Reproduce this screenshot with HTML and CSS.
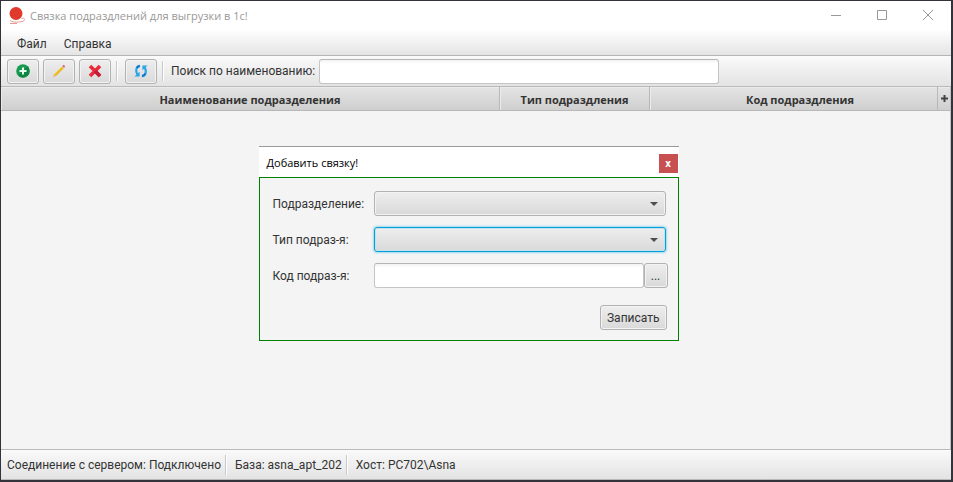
FILE: index.html
```html
<!DOCTYPE html>
<html lang="ru">
<head>
<meta charset="utf-8">
<title>Связка подраздлений для выгрузки в 1с!</title>
<link rel="stylesheet" href="styles.css">
</head>
<body>
<div class="window">
  <header class="titlebar">
    <svg class="app-icon" width="18" height="18" viewBox="0 0 18 18" aria-hidden="true">
      <circle cx="8" cy="6.500" r="6.500" fill="#e23b2e"/>
      <path d="M3 5.500L10 2M4 9L12 5M7 12L13 9" stroke="#d2382c" stroke-width=".7"/>
      <path d="M2 13.500C6 16 11 15 14 14.500C18 13.500 17 10.500 13.500 11.500M2 16.500H9" fill="none" stroke="#e79a92" stroke-width="1"/>
    </svg>
    <h1 class="title">Связка подраздлений для выгрузки в 1с!</h1>
    <div class="window-controls">
      <button class="window-button" type="button" aria-label="Свернуть"><svg width="12" height="12" viewBox="0 0 12 12"><path d="M1 5.500H11"/></svg></button>
      <button class="window-button" type="button" aria-label="Развернуть"><svg width="12" height="12" viewBox="0 0 12 12"><path d="M1.500 .5H10.500V9.500H1.500Z"/></svg></button>
      <button class="window-button" type="button" aria-label="Закрыть"><svg width="12" height="12" viewBox="0 0 12 12"><path d="M1 0L11 10M11 0L1 10"/></svg></button>
    </div>
  </header>

  <nav class="menubar">
    <button class="menu-item" type="button">Файл</button>
    <button class="menu-item" type="button">Справка</button>
  </nav>

  <div class="toolbar">
    <button class="button tool" type="button" aria-label="Добавить">
      <svg width="16" height="16" viewBox="0 0 16 16"><circle cx="8" cy="8" r="6.800" fill="#169b50"/><path d="M12.800 3.200A6.800 6.800 0 0 1 3.200 12.800Z" fill="#0f8742"/><path d="M8 4.500V11.500M4.500 8H11.500" stroke="#e8fff0" stroke-width="2"/></svg>
    </button>
    <button class="button tool" type="button" aria-label="Изменить">
      <svg width="16" height="16" viewBox="0 0 16 16"><path d="M3.500 12.500L12 4" stroke="#f3bd12" stroke-width="2.200"/><path d="M4.300 13.300L12.800 4.800" stroke="#dda30c" stroke-width=".7"/><path d="M1.500 14.500L2.600 11.600L4.400 13.400Z" fill="#d9c4a4"/><path d="M11.200 3.200L12.800 4.800" stroke="#d8d8d8" stroke-width="1.200"/><path d="M12 2.400L13.600 4" stroke="#e0606a" stroke-width="1.800"/></svg>
    </button>
    <button class="button tool" type="button" aria-label="Удалить">
      <svg width="16" height="16" viewBox="0 0 16 16"><path d="M3 3L13 13M13 3L3 13" stroke="#ea2b3c" stroke-width="3.600"/><path d="M8 8L13 13" stroke="#c31c35" stroke-width="3.600"/></svg>
    </button>
    <span class="separator"></span>
    <button class="button tool" type="button" aria-label="Обновить">
      <svg width="16" height="16" viewBox="0 0 16 16" fill="none"><path d="M7 2.800C2.800 3.500 2.200 8.500 4.600 11.800" stroke="#2aa5e8" stroke-width="2.200"/><path d="M1.400 13.400H6.600V8.800Z" fill="#2aa5e8"/><path d="M6.600 2.900C5.200 3.200 4.300 4 3.800 5" stroke="#1677c8" stroke-width="2.200"/><path d="M9 13.200C13.200 12.500 13.800 7.500 11.400 4.200" stroke="#2aa5e8" stroke-width="2.200"/><path d="M9 13.200C10.800 12.900 11.900 11.800 12.300 10.500" stroke="#1677c8" stroke-width="2.200"/><path d="M14.600 2.600H9.400V7.200Z" fill="#2aa5e8"/></svg>
    </button>
    <span class="separator"></span>
    <label class="search-label" for="search">Поиск по наименованию:</label>
    <input class="field search" id="search" type="text">
  </div>

  <main class="content">
    <table class="grid">
      <colgroup><col class="col-name"><col class="col-type"><col class="col-code"></colgroup>
      <thead>
        <tr>
          <th scope="col">Наименование подразделения</th>
          <th scope="col">Тип подраздления</th>
          <th scope="col">Код подраздления</th>
        </tr>
      </thead>
    </table>
    <button class="column-menu" type="button" aria-label="Столбцы"><svg width="7" height="7" viewBox="0 0 7 7"><path d="M3.500 0V7M0 3.500H7" stroke="#444" stroke-width="2"/></svg></button>

    <section class="dialog" role="dialog" aria-labelledby="dialog-title">
      <div class="dialog-head">
        <h2 class="dialog-title" id="dialog-title">Добавить связку!</h2>
        <button class="dialog-close" type="button">x</button>
      </div>
      <form class="dialog-body">
        <div class="row">
          <label class="row-label" for="unit">Подразделение:</label>
          <span class="combo"><select class="button combo-box" id="unit"></select></span>
        </div>
        <div class="row">
          <label class="row-label" for="type">Тип подраз-я:</label>
          <span class="combo"><select class="button combo-box active" id="type"></select></span>
        </div>
        <div class="row">
          <label class="row-label" for="code">Код подраз-я:</label>
          <input class="field code" id="code" type="text">
          <button class="button browse" type="button">...</button>
        </div>
        <div class="actions">
          <button class="button save" type="button">Записать</button>
        </div>
      </form>
    </section>
  </main>

  <footer class="statusbar">
    <span>Соединение с сервером: Подключено</span>
    <span class="separator"></span>
    <span>База: asna_apt_202</span>
    <span class="separator"></span>
    <span>Хост: PC702\Asna</span>
  </footer>
</div>
</body>
</html>
```
FILE: styles.css
```css
* {
  box-sizing: border-box;
}

body {
  margin: 0;
  background: #2b282b;
  color: #333;
  font: 12px/16px Roboto, "Open Sans", sans-serif;
}

button,
input,
select {
  margin: 0;
  font: inherit;
  color: inherit;
}

.window {
  display: flex;
  flex-direction: column;
  height: 100vh;
  border: solid #34323a;
  border-width: 1px 2px 2px 1px;
  background: #f4f4f4;
}

.titlebar {
  display: flex;
  flex: none;
  align-items: center;
  height: 30px;
  padding-left: 7px;
  background: #fff;
}

.title {
  flex: 1;
  margin: 0 0 0 4px;
  color: #999;
  font: 400 11px/16px "Open Sans", sans-serif;
}

.window-controls {
  display: flex;
}

.window-button {
  display: grid;
  place-items: center;
  width: 46px;
  height: 30px;
  padding: 0;
  border: 0;
  background: none;
}

.window-button path {
  fill: none;
  stroke: #999;
}

.menubar {
  display: flex;
  flex: none;
  height: 25px;
  padding: 2px 8px 0;
  border-bottom: 1px solid #b5b5b5;
  background: linear-gradient(#fdfdfd, #e4e4e4);
}

.menu-item {
  padding: 0 8px;
  border: 0;
  background: none;
}

.menu-item + .menu-item {
  margin-left: 1px;
}

.toolbar {
  display: flex;
  flex: none;
  align-items: center;
  gap: 4px;
  height: 31px;
  padding: 0 6px;
  border-bottom: 1px solid #bababa;
  background: linear-gradient(#fafafa, #e3e3e3);
}

.button {
  display: grid;
  place-items: center;
  height: 25px;
  padding: 0;
  border: 1px solid #b2b2b2;
  border-radius: 3px;
  background: linear-gradient(#eeeeee, #d9d9d9);
  box-shadow: inset 0 0 0 1px #f3f3f3;
}

.tool {
  width: 32px;
}

.separator {
  width: 2px;
  height: 20px;
  margin: 0 4px 0 0;
  border-left: 1px solid #c8c8c8;
  background: #fff;
}

.toolbar .separator {
  margin: 0 3px 0 1px;
}

.search-label {
  white-space: nowrap;
}

.field {
  height: 25px;
  padding: 0 7px;
  border: 1px solid #c5c5c5;
  border-top-color: #b5b5b5;
  border-radius: 3px;
  background: linear-gradient(#f3f3f3, #fff 4px);
}

.search {
  width: 400px;
}

.content {
  position: relative;
  flex: 1;
  border: solid #c2c2c2;
  border-width: 0 1px 0 0;
}

.grid {
  width: 100%;
  border-collapse: separate;
  border-spacing: 0;
  table-layout: fixed;
}

.grid th {
  height: 24px;
  padding: 2px 0 0;
  border: solid #b8b8b8;
  border-width: 0 1px 1px 0;
  background: linear-gradient(#e4e4e4, #cfcfcf);
  box-shadow: inset 1px 1px 0 #ebebeb;
  font: 700 11px/16px "Open Sans", sans-serif;
}

.grid th:last-child {
  border-right: 0;
}

.col-type {
  width: 150px;
}

.col-code {
  width: 300px;
}

.column-menu {
  position: absolute;
  top: 0;
  right: 0;
  display: grid;
  place-items: center;
  width: 13px;
  height: 23px;
  padding: 0;
  border: 0;
  border-left: 1px solid #b8b8b8;
  background: none;
}

.dialog {
  position: absolute;
  top: 59px;
  left: calc(50% - 217px);
  width: 420px;
}

.dialog-head {
  display: flex;
  align-items: center;
  justify-content: space-between;
  height: 31px;
  padding: 1px 1px 0 8px;
  border-top: 1px solid #999;
  background: #fff;
}

.dialog-title {
  margin: 0;
  color: #000;
  font: 400 11px/16px "Open Sans", sans-serif;
}

.dialog-close {
  width: 19px;
  height: 19px;
  margin-top: 2px;
  padding: 0;
  border: 0;
  background: #c75050;
  color: #fff;
  font-size: 11px;
  font-weight: 700;
  line-height: 16px;
}

.dialog-body {
  display: flex;
  flex-direction: column;
  gap: 11px;
  padding: 13px 10px 10px 13px;
  border: 1px solid #008000;
  background: #f4f4f4;
}

.row {
  display: flex;
  align-items: center;
}

.row-label {
  flex: none;
  width: 101px;
}

.combo {
  position: relative;
  flex: 1;
  margin-right: 2px;
}

.combo::after {
  content: "";
  position: absolute;
  top: 11px;
  right: 8px;
  border: solid transparent;
  border-width: 4px 4px 0;
  border-top-color: #4d4d4d;
  pointer-events: none;
}

.combo-box {
  display: block;
  width: 100%;
  appearance: none;
}

.active {
  border-color: #039ed3;
  box-shadow: inset 0 0 0 1px #c4e3ef, 0 0 2px 1px #9fd8ee;
}

.code {
  flex: 1;
  min-width: 0;
}

.browse {
  width: 24px;
}

.actions {
  display: flex;
  justify-content: flex-end;
  margin: 6px 1px 0 0;
}

.save {
  padding: 0 6px;
}

.statusbar {
  display: flex;
  flex: none;
  align-items: center;
  gap: 4px;
  height: 31px;
  padding: 1px 6px 0;
  border: solid #bababa;
  border-width: 1px 0;
  background: linear-gradient(#fafafa, #e3e3e3);
}
```
